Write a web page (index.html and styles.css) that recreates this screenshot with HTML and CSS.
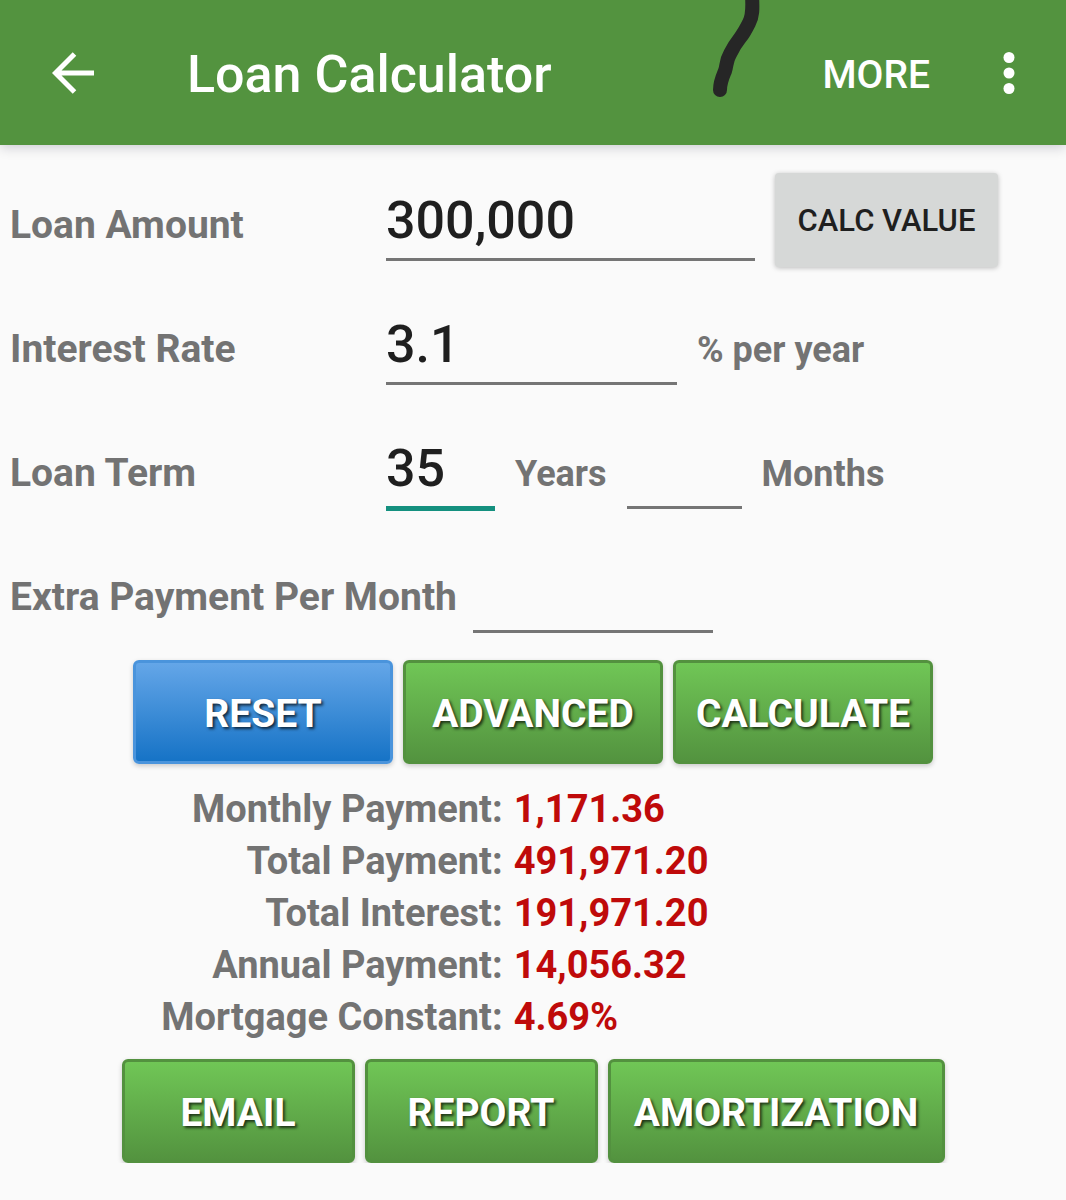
FILE: index.html
```html
<!DOCTYPE html>
<html lang="en">
<head>
<meta charset="utf-8">
<meta name="viewport" content="width=device-width, initial-scale=1">
<title>Loan Calculator</title>
<link rel="stylesheet" href="styles.css">
</head>
<body>
<header class="app-bar">
  <button class="icon-button" type="button" aria-label="Back">
    <svg class="back-icon" viewBox="0 0 42 42" aria-hidden="true"><path d="M22.500 2 L3.500 21 L22.500 40 M3.500 21 H42" fill="none" stroke="currentColor" stroke-width="5"/></svg>
  </button>
  <h1 class="title">Loan Calculator</h1>
  <button class="more-button" type="button">MORE</button>
  <button class="icon-button" type="button" aria-label="Options">
    <svg class="dots-icon" viewBox="0 0 12 42" aria-hidden="true"><g fill="currentColor"><circle cx="6" cy="5.500" r="5.500"/><circle cx="6" cy="21" r="5.500"/><circle cx="6" cy="36.500" r="5.500"/></g></svg>
  </button>
  <svg class="pen-mark" viewBox="0 0 50 98" aria-hidden="true"><path d="M42 -8 C42 4 44 14 39 23 C36 29 34 33 30 38 C26 43 23 48 20 54 C16 61 17 65 15 71 C12 78 10 82 10 90" fill="none" stroke="#262626" stroke-width="14" stroke-linecap="round" stroke-linejoin="round"/></svg>
</header>
<main>
  <form class="loan-form">
    <div class="row">
      <label class="label" for="amount">Loan Amount</label>
      <input class="field field-amount" id="amount" type="text" value="300,000">
      <button class="value-button" type="button">CALC VALUE</button>
    </div>
    <div class="row">
      <label class="label" for="rate">Interest Rate</label>
      <input class="field field-rate" id="rate" type="text" value="3.1">
      <span class="unit">% per year</span>
    </div>
    <div class="row">
      <label class="label" for="years">Loan Term</label>
      <input class="field field-years active" id="years" type="text" value="35">
      <label class="unit" for="years">Years</label>
      <input class="field field-months" id="months" type="text">
      <label class="unit" for="months">Months</label>
    </div>
    <div class="row row-compact">
      <label class="label label-auto" for="extra">Extra Payment Per Month</label>
      <input class="field field-extra" id="extra" type="text">
    </div>
    <div class="actions">
      <button class="button button-blue" type="reset">RESET</button>
      <button class="button" type="button">ADVANCED</button>
      <button class="button" type="button">CALCULATE</button>
    </div>
  </form>
  <table class="results">
    <tbody>
      <tr><th scope="row">Monthly Payment:</th><td>1,171.36</td></tr>
      <tr><th scope="row">Total Payment:</th><td>491,971.20</td></tr>
      <tr><th scope="row">Total Interest:</th><td>191,971.20</td></tr>
      <tr><th scope="row">Annual Payment:</th><td>14,056.32</td></tr>
      <tr><th scope="row">Mortgage Constant:</th><td>4.69%</td></tr>
    </tbody>
  </table>
  <div class="actions actions-share">
    <button class="button" type="button">EMAIL</button>
    <button class="button" type="button">REPORT</button>
    <button class="button button-wide" type="button">AMORTIZATION</button>
  </div>
</main>
</body>
</html>
```
FILE: styles.css
```css
* {
  box-sizing: border-box;
}

body {
  margin: 0;
  background: #fafafa;
  color: #737373;
  font-family: Roboto, "Liberation Sans", sans-serif;
  font-size: 39px;
}

button,
input {
  margin: 0;
  border: 0;
  padding: 0;
  background: none;
  font-family: inherit;
}

.app-bar {
  position: relative;
  display: flex;
  align-items: center;
  height: 145px;
  padding: 0 36px 0 52px;
  background: #53933f;
  color: #fff;
  box-shadow: 0 2px 12px rgba(0, 0, 40, 0.2);
}

.icon-button {
  display: flex;
  justify-content: center;
  color: inherit;
}

.back-icon {
  width: 42px;
  height: 42px;
}

.dots-icon {
  width: 42px;
  height: 42px;
}

.title {
  flex: 1;
  margin: 0 0 0 93px;
  padding-top: 4px;
  font-size: 52px;
  font-weight: 500;
  line-height: 60px;
}

.more-button {
  margin-right: 58px;
  padding-top: 4px;
  color: inherit;
  font-size: 39px;
  font-weight: 500;
}

.pen-mark {
  position: absolute;
  top: 0;
  right: 306px;
  width: 50px;
  height: 98px;
}

.loan-form {
  padding-top: 13px;
}

.row {
  display: flex;
  align-items: baseline;
  gap: 20px;
  min-height: 124px;
  padding: 15px 10px;
}

.row-compact {
  gap: 16px;
}

.label {
  width: 356px;
  font-weight: 700;
}

.label-auto {
  width: auto;
}

.unit {
  font-size: 36px;
  font-weight: 700;
}

.field {
  height: 88px;
  min-width: 0;
  padding-top: 10px;
  border-bottom: 3px solid #757575;
  border-radius: 0;
  color: #1f1f1f;
  font-size: 52px;
  font-weight: 500;
  outline: none;
}

.field.active {
  height: 90px;
  border-bottom: 5px solid #14907f;
}

.field-amount {
  width: 369px;
}

.field-rate {
  width: 291px;
}

.field-years {
  width: 109px;
}

.field-months {
  width: 115px;
}

.field-extra {
  width: 240px;
}

.value-button {
  align-self: flex-start;
  width: 223px;
  height: 94px;
  border-radius: 4px;
  background: #d6d8d7;
  color: #1f1f1f;
  font-size: 31px;
  font-weight: 500;
  box-shadow: 0 1px 5px rgba(0, 0, 0, 0.25);
}

.actions {
  display: flex;
  justify-content: center;
  gap: 10px;
  padding-top: 6px;
}

.button {
  width: 260px;
  height: 104px;
  padding-top: 4px;
  border: 3px solid #53913f;
  border-radius: 6px;
  background: linear-gradient(#70c656, #53933f);
  color: #fff;
  font-size: 39px;
  font-weight: 700;
  text-shadow: 2px 2px 3px rgba(0, 0, 0, 0.7);
  box-shadow: 0 2px 5px rgba(0, 0, 0, 0.2);
}

.button-blue {
  border-color: #4a94dc;
  background: linear-gradient(#64a6e8, #1673c6);
}

.results {
  width: 100%;
  margin-top: 19px;
  border-collapse: collapse;
  font-size: 38px;
  line-height: 52px;
}

.results th {
  width: 48%;
  padding: 0 9px 0 0;
  font-weight: 700;
  text-align: right;
}

.results td {
  padding: 0 0 0 2px;
  color: #bf0a0a;
  font-weight: 700;
}

.actions-share {
  padding-top: 16px;
}

.actions-share .button {
  width: 233px;
}

.actions-share .button-wide {
  width: 337px;
}
```
